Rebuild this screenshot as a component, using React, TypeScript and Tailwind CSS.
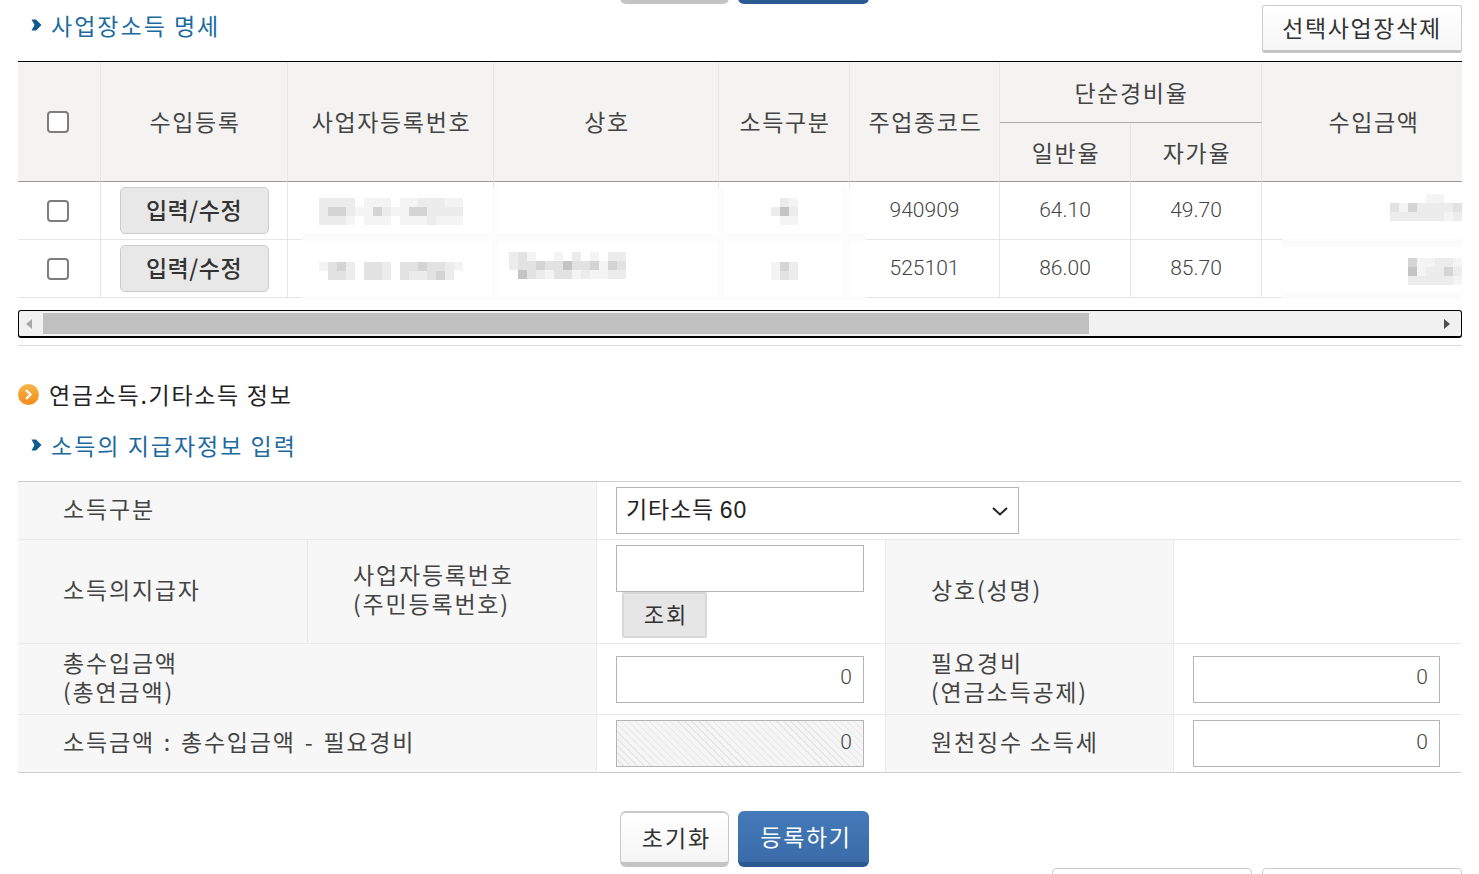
const KR = 'font-["Noto_Sans_CJK_KR","Noto_Sans",sans-serif]';

// mosaic blocks over redacted values: each number is how dark the 9px block is
const Mosaic = ({ cells }: { cells: number[][] }) => {
  const shade = ['#ffffff', '#f4f4f4', '#ececec', '#e2e2e2', '#d4d4d4', '#c4c4c4'];
  return (
    <svg
      width={cells[0].length * 9}
      height={cells.length * 9}
      className="inline-block align-middle"
      shapeRendering="crispEdges"
    >
      {cells.map((row, y) =>
        row.map((v, x) => <rect key={`${x}-${y}`} x={x * 9} y={y * 9} width="9" height="9" fill={shade[v]} />)
      )}
    </svg>
  );
};

const Chevron = () => (
  <svg width="11" height="12" viewBox="0 0 11 12" className="shrink-0">
    <path d="M0.5 0.5 H5 L10.5 6 L5 11.5 H0.5 L3.5 6 Z" fill="#0f5a8f" />
  </svg>
);

const OrangeDot = () => (
  <svg width="21" height="21" viewBox="0 0 21 21" className="shrink-0">
    <defs>
      <linearGradient id="og" x1="0" y1="0" x2="0" y2="1">
        <stop offset="0" stopColor="#f9b54a" />
        <stop offset="1" stopColor="#f08c1a" />
      </linearGradient>
    </defs>
    <circle cx="10.5" cy="10.5" r="10.5" fill="url(#og)" />
    <path d="M8 6 L12.5 10.5 L8 15" fill="none" stroke="#fff" strokeWidth="2.4" />
  </svg>
);

const SubTitle = ({ children }: { children: string }) => (
  <div className="flex items-center gap-[9px] pl-[13px]">
    <Chevron />
    <span className="text-[23px] leading-[30px] tracking-[2px] text-[#1d6a9f]">{children}</span>
  </div>
);

const FormButtons = ({ labels = true }: { labels?: boolean }) => (
  <div className="flex gap-[9px] pl-[602px]">
    <button className="h-[56px] w-[109px] rounded-[6px] border border-[#c8c8c8] border-t-2 border-b-[5px] border-b-[#c4c4c4] bg-gradient-to-b from-white to-[#f5f5f5] pl-[4px] text-[23px] tracking-[2px] text-[#333]">
      {labels && '초기화'}
    </button>
    <button className="h-[56px] w-[131px] rounded-[6px] border-b-[5px] border-b-[#2b5a92] bg-gradient-to-b from-[#447ab9] to-[#3a6ca8] pl-[5px] text-[23px] tracking-[1.7px] text-white">
      {labels && '등록하기'}
    </button>
  </div>
);

const CheckBox = () => (
  <input
    type="checkbox"
    className="ml-[29px] block h-[22px] w-[22px] appearance-none rounded-[4px] border-2 border-[#7d7d7d] bg-white"
  />
);

const EditButton = () => (
  <button className="h-[47px] w-[149px] rounded-[5px] border border-[#ccc] bg-[#e9e8e8] pb-[3px] text-[23px] font-medium tracking-[0.5px] text-[#333]">
    입력/수정
  </button>
);

const thMain = 'border-r border-b border-r-[#e6e6e6] border-b-[#999] bg-[#f4f3f2] pl-[2px] text-center text-[23px] font-normal tracking-[1.6px] text-[#444]';
const tdMain = 'border-r border-b border-[#e6e6e6] text-center';
const numText = 'font-["Roboto",sans-serif] font-light text-[21px] text-[#444]';

const rows = [
  {
    reg: [
      [2, 2, 2, 2, 0, 1, 1, 1, 0, 1, 1, 2, 2, 2, 1, 1],
      [2, 4, 4, 2, 1, 1, 4, 2, 1, 1, 4, 4, 2, 2, 2, 2],
      [2, 2, 2, 1, 0, 1, 1, 1, 0, 1, 1, 1, 2, 1, 1, 1],
    ],
    name: [] as number[][],
    nameShift: '',
    kind: [
      [0, 2, 1],
      [2, 5, 2],
      [0, 1, 1],
    ],
    code: '940909',
    a: '64.10',
    b: '49.70',
    amount: [
      [0, 0, 0, 0, 1, 1, 0, 0],
      [3, 1, 4, 2, 2, 2, 2, 3],
      [2, 2, 2, 2, 2, 2, 1, 2],
    ],
    amountPad: 'pb-[7px]',
  },
  {
    reg: [
      [1, 3, 4, 2, 0, 3, 3, 2, 0, 3, 3, 4, 3, 3, 2, 1],
      [0, 3, 3, 2, 0, 3, 3, 2, 0, 3, 2, 2, 3, 4, 2, 0],
    ],
    name: [
      [2, 3, 1, 0, 0, 1, 0, 2, 0, 1, 0, 2, 2],
      [2, 3, 3, 4, 3, 3, 5, 3, 3, 4, 1, 4, 3],
      [0, 5, 3, 2, 1, 3, 3, 1, 2, 1, 1, 2, 2],
    ],
    nameShift: 'pb-[8px]',
    kind: [
      [1, 4, 2],
      [1, 3, 2],
    ],
    code: '525101',
    a: '86.00',
    b: '85.70',
    amount: [
      [4, 1, 1, 2, 2, 1],
      [5, 1, 2, 2, 4, 2],
      [2, 2, 2, 2, 2, 1],
    ],
    amountPad: 'pt-[4px]',
  },
];

const IncomeTable = () => (
  <div className="relative border-t border-black">
    <table className="w-[1444px] table-fixed border-separate border-spacing-0">
      <colgroup>
        <col className="w-[83px]" />
        <col className="w-[187px]" />
        <col className="w-[206px]" />
        <col className="w-[225px]" />
        <col className="w-[131px]" />
        <col className="w-[150px]" />
        <col className="w-[131px]" />
        <col className="w-[131px]" />
        <col className="w-[200px]" />
      </colgroup>
      <thead>
        <tr className="h-[61px]">
          <th rowSpan={2} className="border-r border-b border-r-[#e6e6e6] border-b-[#999] bg-[#f4f3f2]">
            <CheckBox />
          </th>
          <th rowSpan={2} className={thMain}>수입등록</th>
          <th rowSpan={2} className={thMain}>사업자등록번호</th>
          <th rowSpan={2} className={thMain}>상호</th>
          <th rowSpan={2} className={thMain}>소득구분</th>
          <th rowSpan={2} className={thMain}>주업종코드</th>
          <th colSpan={2} className="border-r border-b border-r-[#e6e6e6] border-b-[#aaa] bg-[#f4f3f2] pl-[2px] text-center text-[23px] font-normal tracking-[1.6px] text-[#444]">
            단순경비율
          </th>
          <th rowSpan={2} className="border-b border-b-[#999] bg-[#f4f3f2] pl-[24px] text-center text-[23px] font-normal tracking-[1.6px] text-[#444]">
            수입금액
          </th>
        </tr>
        <tr className="h-[59px]">
          <th className={thMain}>일반율</th>
          <th className={thMain}>자가율</th>
        </tr>
      </thead>
      <tbody>
        {rows.map((r) => (
          <tr key={r.code} className="h-[58px]">
            <td className={tdMain}><CheckBox /></td>
            <td className={tdMain}><EditButton /></td>
            <td className={tdMain}><Mosaic cells={r.reg} /></td>
            <td className={`border-r border-b border-[#e6e6e6] pl-[15px] text-left ${r.nameShift}`}>
              {r.name.length > 0 && <Mosaic cells={r.name} />}
            </td>
            <td className={tdMain}><Mosaic cells={r.kind} /></td>
            <td className={`${tdMain} ${numText}`}>{r.code}</td>
            <td className={`${tdMain} ${numText}`}>{r.a}</td>
            <td className={`${tdMain} ${numText}`}>{r.b}</td>
            <td className={`border-b border-[#e6e6e6] text-right ${r.amountPad}`}><Mosaic cells={r.amount} /></td>
          </tr>
        ))}
      </tbody>
    </table>
    {/* faint leftovers of the blur, they lie over the grid lines */}
    <div className="absolute left-[284px] top-[171px] h-[8px] w-[564px] bg-[#fcfcfc]" />
    <div className="absolute left-[284px] top-[234px] h-[4px] w-[564px] bg-[#fcfcfc]" />
    <div className="absolute left-[1264px] top-[177px] h-[8px] w-[180px] bg-[#fbfbfb]" />
    <div className="absolute left-[1264px] top-[231px] h-[5px] w-[180px] bg-[#fbfbfb]" />
    <div className="absolute left-[474px] top-[126px] h-[112px] w-[6px] bg-[#fcfcfc]" />
    <div className="absolute left-[699px] top-[126px] h-[112px] w-[7px] bg-[#fcfcfc]" />
    <div className="absolute left-[824px] top-[126px] h-[112px] w-[8px] bg-[#fcfcfc]" />
  </div>
);

const ScrollBar = () => (
  <div className="mt-[12px] flex h-[28px] items-center rounded-[3px] border border-b-[2px] border-black bg-[#f1f1f1] pl-[5px] pr-[10px]">
    <svg width="10" height="12" viewBox="0 0 10 12" className="shrink-0">
      <path d="M8 1 L2 6 L8 11 Z" fill="#a8a8a8" />
    </svg>
    <div className="ml-[9px] h-[21px] w-[1046px] bg-[#c0c0c0]" />
    <div className="flex-1" />
    <svg width="8" height="12" viewBox="0 0 8 12" className="shrink-0">
      <path d="M1 1 L7 6 L1 11 Z" fill="#505050" />
    </svg>
  </div>
);

const thForm = 'border-r border-b border-[#e9e9e9] bg-[#f7f7f7] pb-[5px] pl-[45px] text-left text-[23px] font-normal leading-[29px] tracking-[1.8px] text-[#444]';
const tdForm = 'border-r border-b border-[#e9e9e9] pl-[19px] align-middle';
const boxInput = 'block h-[47px] border border-[#b5b5b5] bg-white pb-[4px] pr-[11px] text-right font-["Roboto",sans-serif] font-light text-[21px] text-[#444] outline-none';

const PayerForm = () => (
  <table className="w-[1443px] table-fixed border-separate border-spacing-0 border-t border-[#ccc]">
    <colgroup>
      <col className="w-[290px]" />
      <col className="w-[289px]" />
      <col className="w-[289px]" />
      <col className="w-[288px]" />
      <col className="w-[287px]" />
    </colgroup>
    <tbody>
      <tr className="h-[58px]">
        <th colSpan={2} className={thForm}>소득구분</th>
        <td colSpan={3} className="border-b border-[#e9e9e9] pl-[19px]">
          <div className="flex h-[47px] w-[403px] items-center justify-between border border-[#b5b5b5] bg-white pl-[9px] pr-[9px]">
            <span className="pb-[2px] text-[23px] tracking-[0.8px] text-[#222]">
              기타소득 <span className='font-["Liberation_Sans",sans-serif]'>60</span>
            </span>
            <svg width="18" height="12" viewBox="0 0 18 12">
              <path d="M2 3 L9 9.5 L16 3" fill="none" stroke="#222" strokeWidth="2" />
            </svg>
          </div>
        </td>
      </tr>
      <tr className="h-[104px]">
        <th className={thForm}>소득의지급자</th>
        <th className={thForm}>
          사업자등록번호
          <br />
          (주민등록번호)
        </th>
        <td className={tdForm}>
          <input className={`${boxInput} w-[248px]`} defaultValue="" />
          <button className="ml-[6px] block h-[46px] w-[85px] rounded-[2px] border-2 border-[#d8d8d8] bg-[#e6e6e6] pb-[3px] pl-[3px] text-[22px] tracking-[2px] text-[#333]">
            조회
          </button>
        </td>
        <th className={thForm}>상호(성명)</th>
        <td className="border-b border-[#e9e9e9]" />
      </tr>
      <tr className="h-[71px]">
        <th colSpan={2} className={thForm}>
          총수입금액
          <br />
          (총연금액)
        </th>
        <td className={tdForm}>
          <input className={`${boxInput} w-[248px]`} defaultValue="0" />
        </td>
        <th className={thForm}>
          필요경비
          <br />
          (연금소득공제)
        </th>
        <td className="border-b border-[#e9e9e9] pl-[19px]">
          <input className={`${boxInput} w-[247px]`} defaultValue="0" />
        </td>
      </tr>
      <tr className="h-[58px]">
        <th colSpan={2} className={`${thForm} border-b-[#ccc] [word-spacing:2px]`}>소득금액 : 총수입금액 - 필요경비</th>
        <td className={`${tdForm} border-b-[#ccc]`}>
          <input
            disabled
            className={`${boxInput} w-[248px] bg-[repeating-linear-gradient(45deg,#f5f5f5_0px,#f5f5f5_4px,#e6e6e6_4px,#e6e6e6_5px)]`}
            defaultValue="0"
          />
        </td>
        <th className={`${thForm} border-b-[#ccc]`}>원천징수 소득세</th>
        <td className="border-b border-[#ccc] pl-[19px]">
          <input className={`${boxInput} w-[247px]`} defaultValue="0" />
        </td>
      </tr>
    </tbody>
  </table>
);

export default function App() {
  return (
    <div className={`h-[874px] overflow-hidden bg-white pl-[18px] pr-[17px] ${KR}`}>
      {/* tail of the buttons from the form above */}
      <div className="flex h-[4px] flex-col justify-end overflow-hidden">
        <div className="shrink-0">
          <FormButtons labels={false} />
        </div>
      </div>

      <div className="flex h-[57px] items-start justify-between">
        <div className="pt-[6px]">
          <SubTitle>사업장소득 명세</SubTitle>
        </div>
        <button className="mt-[1px] h-[48px] w-[200px] rounded-[3px] border border-[#ccc] border-b-[3px] border-b-[#c4c4c4] bg-gradient-to-b from-white to-[#f6f6f6] pb-[2px] text-[23px] tracking-[1.6px] text-[#333]">
          선택사업장삭제
        </button>
      </div>

      <IncomeTable />
      <ScrollBar />
      <div className="mt-[7px] border-b border-[#ddd]" />

      <div className="mt-[37px] flex h-[22px] items-center gap-[10px]">
        <OrangeDot />
        <span className="text-[23px] tracking-[1.7px] text-[#222]">연금소득.기타소득 정보</span>
      </div>
      <div className="mt-[25px] h-[30px]">
        <SubTitle>소득의 지급자정보 입력</SubTitle>
      </div>
      <div className="mt-[21px]">
        <PayerForm />
      </div>

      <div className="mt-[38px]">
        <FormButtons />
      </div>
      <div className="mt-[1px] flex justify-end gap-[10px]">
        <div className="h-[20px] w-[200px] rounded-t-[4px] border border-[#ccc]" />
        <div className="h-[20px] w-[200px] rounded-t-[4px] border border-[#ccc]" />
      </div>
    </div>
  );
}
